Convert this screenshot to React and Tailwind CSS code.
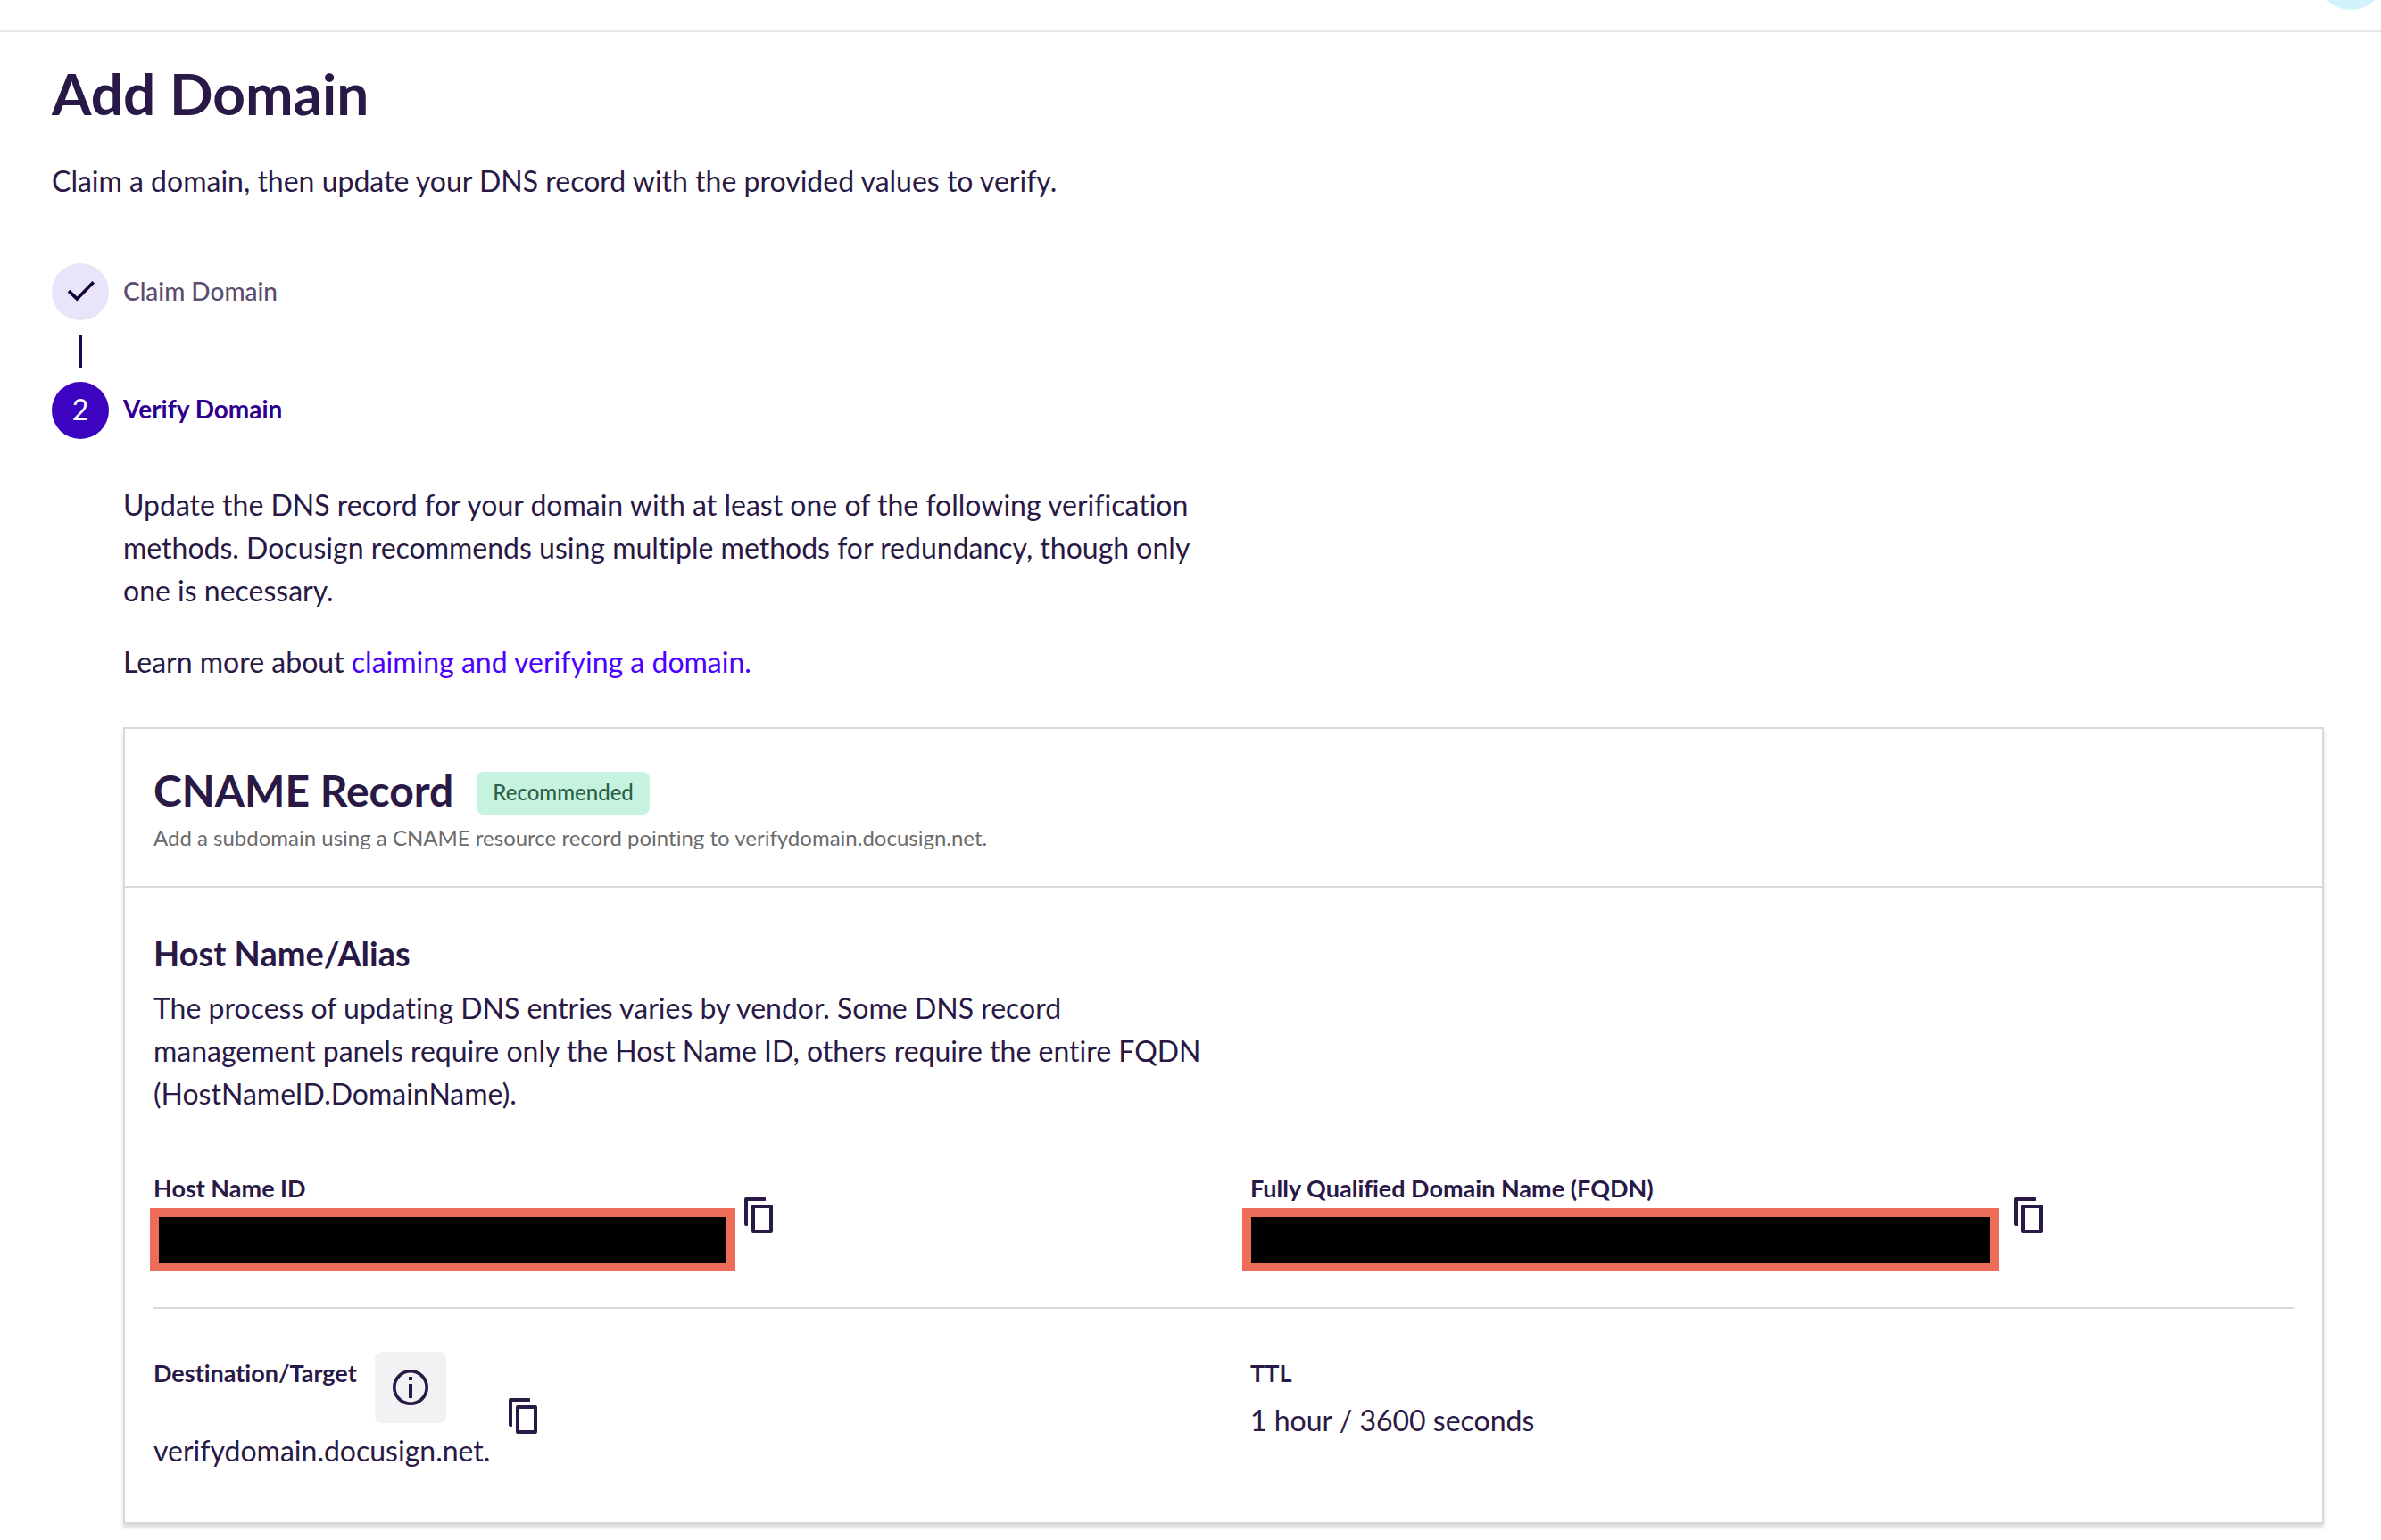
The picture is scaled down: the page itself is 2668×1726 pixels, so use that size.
import React from "react";

function CheckIcon() {
  return (
    <svg viewBox="0 0 24 24" className="size-12 fill-[#130032]" aria-hidden="true">
      <path d="M6.2 10.9 10.2 14.7 18.7 6 20 7.3 10.2 17.2 4.8 12.3z" />
    </svg>
  );
}

function InfoIcon() {
  return (
    <svg viewBox="0 0 24 24" className="size-12" aria-hidden="true">
      <circle cx="12" cy="12" r="9.1" fill="none" stroke="currentColor" strokeWidth="1.8" />
      <path fill="currentColor" d="M11 6h2v2h-2zM11 10h2v8h-2z" />
    </svg>
  );
}

function CopyButton({ label, className }) {
  return (
    <button type="button" aria-label={label} className={`size-12 shrink-0 cursor-pointer ${className}`}>
      <svg viewBox="0 0 24 24" className="size-12" fill="currentColor" aria-hidden="true">
        <path d="M5 2h10.6a.4.4 0 0 1 .4.4v1.2a.4.4 0 0 1-.4.4H6v13.6a.4.4 0 0 1-.4.4H5a1 1 0 0 1-1-1V3a1 1 0 0 1 1-1z" />
        <path
          fillRule="evenodd"
          d="M9 6h10a1 1 0 0 1 1 1v14a1 1 0 0 1-1 1H9a1 1 0 0 1-1-1V7a1 1 0 0 1 1-1zm1 2v12h8V8z"
        />
      </svg>
    </button>
  );
}

function FieldLabel({ children }) {
  return <h4 className="text-[27px] leading-9 font-bold">{children}</h4>;
}

export default function App() {
  return (
    <div className="min-h-screen bg-white font-[Lato,sans-serif] text-[32px] leading-[48px] text-[#291946] [font-variant-ligatures:none]">
      <header className="flex h-9 justify-end overflow-hidden border-b-2 border-[#e9e9e9]">
        <div className="-mt-[69px] -mr-[6px] size-20 shrink-0 rounded-full bg-[#d1f2fb]" />
      </header>

      <main className="pt-[29px] pr-16 pb-4 pl-[58px]">
        <h1 className="text-[64px] leading-20 font-bold">Add Domain</h1>
        <p className="mt-[34px]">
          Claim a domain, then update your DNS record with the provided values to verify.
        </p>

        <ol className="mt-[68px]">
          <li>
            <div className="flex items-center gap-4">
              <span className="flex size-16 items-center justify-center rounded-full bg-[#e8e5fb]">
                <CheckIcon />
              </span>
              <span className="pb-[3px] text-[28px] leading-10 font-medium text-[#5a4d70]">Claim Domain</span>
            </div>
            <div className="mt-[17px] mb-4 ml-[30px] h-9 w-1 bg-[#1f0450]" />
          </li>

          <li>
            <div className="flex items-center gap-4">
              <span className="flex size-16 items-center justify-center rounded-full bg-[#3c04c0] pb-[3px] text-white">
                2
              </span>
              <span className="pb-1 text-[28px] leading-10 font-bold text-[#2f0090]">Verify Domain</span>
            </div>

            <div className="mt-[50px] ml-20">
              <p className="max-w-[1200px]">
                Update the DNS record for your domain with at least one of the following verification
                methods. Docusign recommends using multiple methods for redundancy, though only one is
                necessary.
              </p>
              <p className="mt-8">
                Learn more about{" "}
                <a href="#claiming-and-verifying" className="text-[#4c00ff]">
                  claiming and verifying a domain.
                </a>
              </p>

              <section className="mt-[49px] border-2 border-[#d9d9d9] shadow-[0_4px_4px_rgba(0,0,0,0.15)]">
                <div className="border-b-2 border-[#d9d9d9] px-8 pt-[37px] pb-[38px]">
                  <div className="flex items-center gap-[26px]">
                    <h2 className="text-[48px] leading-16 font-bold">CNAME Record</h2>
                    <span className="mt-[6px] rounded-lg bg-[#c6f3df] px-[18px] pb-[3px] text-2xl leading-[45px] font-medium text-[#2c6047]">
                      Recommended
                    </span>
                  </div>
                  <p className="mt-[5px] text-2xl leading-8 text-[#6b6b6b]">
                    Add a subdomain using a CNAME resource record pointing to verifydomain.docusign.net.
                  </p>
                </div>

                <div className="px-8 pt-[49px] pb-14">
                  <h3 className="text-[38px] leading-12 font-bold">Host Name/Alias</h3>
                  <p className="mt-[14px] max-w-[1180px]">
                    The process of updating DNS entries varies by vendor. Some DNS record management
                    panels require only the Host Name ID, others require the entire FQDN
                    (HostNameID.DomainName).
                  </p>

                  <div className="mt-16 grid grid-cols-2 gap-x-[60px] border-b-2 border-[#d9d9d9] pb-10">
                    <div className="flex items-start">
                      <div>
                        <FieldLabel>Host Name ID</FieldLabel>
                        <div className="mt-1 -ml-1 h-[71px] w-[656px] border-10 border-[#ed6d5a] bg-black" />
                      </div>
                      <CopyButton label="Copy host name ID" className="mt-6 ml-[2px]" />
                    </div>
                    <div className="flex items-start">
                      <div>
                        <FieldLabel>Fully Qualified Domain Name (FQDN)</FieldLabel>
                        <div className="mt-1 -ml-[9px] h-[71px] w-[848px] border-10 border-[#ed6d5a] bg-black" />
                      </div>
                      <CopyButton label="Copy fully qualified domain name" className="mt-6 ml-[9px]" />
                    </div>
                  </div>

                  <div className="grid grid-cols-2 gap-x-[60px] pt-12">
                    <div className="flex items-start">
                      <div>
                        <div className="flex items-start gap-5">
                          <div className="pt-[6px]">
                            <FieldLabel>Destination/Target</FieldLabel>
                          </div>
                          <button
                            type="button"
                            aria-label="About the destination"
                            className="flex size-20 cursor-pointer items-center justify-center rounded-lg bg-[#f2f2f4]"
                          >
                            <InfoIcon />
                          </button>
                        </div>
                        <p className="mt-[7px]">verifydomain.docusign.net.</p>
                      </div>
                      <CopyButton label="Copy destination" className="mt-12 ml-[13px]" />
                    </div>
                    <div className="pt-[6px]">
                      <FieldLabel>TTL</FieldLabel>
                      <p className="mt-[11px]">1 hour / 3600 seconds</p>
                    </div>
                  </div>
                </div>
              </section>
            </div>
          </li>
        </ol>
      </main>
    </div>
  );
}
